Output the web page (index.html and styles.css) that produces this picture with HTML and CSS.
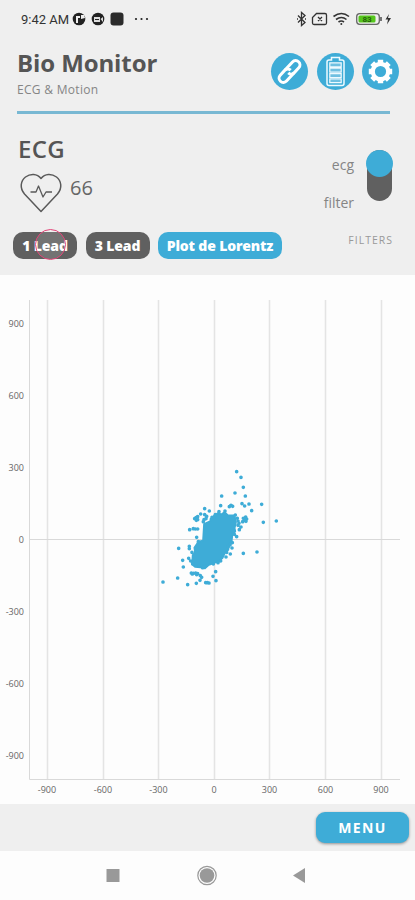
FILE: index.html
```html
<!DOCTYPE html>
<html lang="en">
<head>
  <meta charset="UTF-8">
  <meta name="viewport" content="width=device-width, initial-scale=1">
  <title>Bio Monitor</title>
  <link rel="stylesheet" href="styles.css">
</head>

<body>
  <div class="status-bar">
    <span class="clock">9:42 AM</span>
    <svg class="status-left" width="78" height="16" viewBox="0 0 78 16">
      <circle cx="7" cy="8" r="6.3" fill="#222"/>
      <path d="M4 5h4v2H6v5H4zM9 4h3l1 3-4 1z" fill="#eee"/>
      <circle cx="26" cy="8" r="6.3" fill="#222"/>
      <path d="M22 6h6v5h-6zM28.5 8l2.5-2v5z" fill="#ddd"/>
      <path d="M23 8.5h4" stroke="#222"/>
      <rect x="38.5" y="1.5" width="13" height="13" rx="3" fill="#2b2b2b"/>
      <g fill="#222"><circle cx="64" cy="8" r="1.1"/><circle cx="69.5" cy="8" r="1.1"/><circle cx="75" cy="8" r="1.1"/></g>
    </svg>
    <svg class="status-right" width="98" height="16" viewBox="0 0 98 16" fill="none" stroke="#333" stroke-width="1.3">
      <path d="M2 4.5l7 7-3.500 3V1.500L9 4.500l-7 7M1 8h1M9 8h1"/>
      <path d="M20.500 2.500h8.500q1.500 0 1.500 1.500v8q0 1.500-1.500 1.500H18q-1.500 0-1.500-1.500V6.500zM22 6l4 4M26 6l-4 4"/>
      <path d="M37.500 5.500q8-6 15.500 0M40 8.500q5.500-4 10.500 0M42.500 11q2.800-2 5.500 0" stroke-width="1.6"/>
      <circle cx="45.3" cy="13" r="1" fill="#333" stroke="none"/>
      <rect x="60.7" y="2.7" width="22.6" height="10.6" rx="3" stroke="#666"/>
      <rect x="62.5" y="4.5" width="17" height="7" rx="1.5" fill="#55c51b" stroke="none"/>
      <path d="M85 6v4"/>
      <text class="charge" x="71" y="11">83</text>
      <path d="M93 3l-3.500 5.500h2.500l-1 5 4-6.500h-3z" fill="#333" stroke="none"/>
    </svg>
  </div>

  <header class="app-header">
    <div class="titles">
      <h1>Bio Monitor</h1>
      <p>ECG &amp; Motion</p>
    </div>
    <div class="actions">
      <button class="round-button" aria-label="Connect">
        <svg width="37" height="37" viewBox="0 0 37 37" fill="none" stroke="#fff" stroke-width="3">
          <g transform="rotate(-47 18.5 18.5)">
            <path d="M20.500 22.800H9.500a4.300 4.300 0 0 1 0-8.600H16a4.300 4.300 0 0 1 4.300 4.300"/>
            <path d="M16.500 14.200h11a4.300 4.300 0 0 1 0 8.600H21a4.300 4.300 0 0 1-4.300-4.300"/>
          </g>
        </svg>
      </button>
      <button class="round-button" aria-label="Battery">
        <svg width="37" height="37" viewBox="0 0 37 37" fill="none" stroke="#eefaff" stroke-width="1.5">
          <path d="M14.500 7V4.500h8V7H25q2 0 2 2v21.500q0 2-2 2H12q-2 0-2-2V9q0-2 2-2z"/>
          <path d="M12.800 9.800h11.400v4H12.800zM12.800 15.200h11.400v4H12.800zM12.800 20.600h11.400v4H12.800zM12.800 26h11.400v3.700H12.800z" stroke-width="1.2" fill="#6fc0e1"/>
        </svg>
      </button>
      <button class="round-button" aria-label="Settings">
        <svg width="37" height="37" viewBox="0 0 37 37">
          <circle cx="18.5" cy="18.5" r="7.7" fill="none" stroke="#fff" stroke-width="4.2"/>
          <g stroke="#fff" stroke-width="5.4">
            <path d="M18.500 6.800v4M18.500 26.200v4M6.800 18.500h4M26.200 18.500h4"/>
            <path d="M10.200 10.200l2.800 2.800M24 24l2.800 2.800M10.200 26.800l2.800-2.800M24 13l2.800-2.800"/>
          </g>
        </svg>
      </button>
    </div>
  </header>

  <section class="ecg-panel">
    <div class="ecg-top">
      <div class="reading">
        <h2>ECG</h2>
        <div class="pulse">
          <svg width="42" height="40" viewBox="0 0 42 40" fill="none" stroke="#5a5a5a" stroke-width="1.5" stroke-linejoin="round">
            <path d="M21 38.500L4.500 21C-.5 15 .5 8 5.500 4 10.500.3 17 .3 21 5.500 25 .3 31.500.3 36.500 4 41.500 8 42.500 15 37.500 21z"/>
            <path d="M10.500 19H16l2.500-6 4.500 11 3-5h6" stroke-width="1.3"/>
          </svg>
          <span>66</span>
        </div>
      </div>
      <div class="switch-labels"><span>ecg</span><span>filter</span></div>
      <div class="switch"><div class="knob"></div></div>
    </div>
    <div class="chips">
      <button class="chip lead-one">1 Lead<span class="touch"></span></button>
      <button class="chip">3 Lead</button>
      <button class="chip active">Plot de Lorentz</button>
      <span class="filters">FILTERS</span>
    </div>
  </section>

  <main class="chart">
    <svg width="415" height="529" viewBox="0 275 415 529">
      <path class="grid" d="M47.500 300v479M103.500 300v479M158.500 300v479M214.500 300v479M269.500 300v479M325.500 300v479M381.500 300v479"/>
      <path class="axis" d="M29.500 300v479.500H400M29 539.500h371"/>
      <g class="y-labels">
        <text x="24" y="326.5">900</text>
        <text x="24" y="398.5">600</text>
        <text x="24" y="470.5">300</text>
        <text x="24" y="542.5">0</text>
        <text x="24" y="614.5">-300</text>
        <text x="24" y="686.5">-600</text>
        <text x="24" y="758.5">-900</text>
      </g>
      <g class="x-labels">
        <text x="47" y="793">-900</text>
        <text x="103" y="793">-600</text>
        <text x="158.5" y="793">-300</text>
        <text x="214" y="793">0</text>
        <text x="269.5" y="793">300</text>
        <text x="325.5" y="793">600</text>
        <text x="381" y="793">900</text>
      </g>
      <g transform="translate(150 455) scale(.3333)">
        <path class="cloud" d="M162 207l18-8 12-17 12-8 10 4 10-7 10 10h20l4 22-4 16 2 10-9 13-2 18-7 8-3 17-10 9-7 15-9 9-18 7-16 6-10 9-14-3-16-1-9-8 2-28 7-8-2-14 12-18 14-3z"/>
        <!-- scattered beats -->
        <path class="dots" d="M260 50h0M273 67h0M280 97h0M255 114h0M286 123h0M215 123h0M276 146h0M284 153h0M297 147h0M335 148h0M305 167h0M340 202h0M379 198h0M212 152h0M238 155h0M243 151h0M248 154h0M164 161h0M178 168h0M152 177h0M138 188h0M143 185h0M139 196h0M134 191h0M143 194h0M164 179h0M170 184h0M168 191h0M162 194h0M160 200h0M186 187h0M184 193h0M196 179h0M192 186h0M207 170h0M225 168h0M280 190h0M287 186h0M290 192h0M283 196h0M288 199h0M278 200h0M267 205h0M273 216h0M264 211h0M268 224h0M256 180h0M262 190h0M264 198h0M119 224h0M130 221h0M136 222h0M143 222h0M86 280h0M118 274h0M118 281h0M98 316h0M116 310h0M100 336h0M260 245h0M253 238h0M247 263h0M240 270h0M246 279h0M235 274h0M230 292h0M241 297h0M228 306h0M280 295h0M321 291h0M140 247h0M145 260h0M126 292h0M122 318h0M128 326h0M147 333h0M158 338h0M166 333h0M190 327h0M204 323h0M212 318h0M197 350h0M189 364h0M198 377h0M124 354h0M131 355h0M137 354h0M143 356h0M127 357h0M140 359h0M151 362h0M155 367h0M150 376h0M139 385h0M113 389h0M83 369h0M39 381h0M167 383h0M172 383h0M177 384h0"/>
      </g>
    </svg>
  </main>

  <footer class="menu-bar"><button class="menu-button">MENU</button></footer>

  <nav class="system-nav">
    <svg width="415" height="48" viewBox="0 0 415 48" fill="#999">
      <rect x="106.5" y="18" width="13" height="13"/>
      <circle cx="207" cy="24.5" r="7.3"/>
      <circle cx="207" cy="24.5" r="9.2" fill="none" stroke="#999" stroke-width="1.2"/>
      <path d="M293 24.500l12-7.500v15z"/>
    </svg>
  </nav>
</body>
</html>
```
FILE: styles.css
```css
* {
  box-sizing: border-box;
}

body {
  margin: 0;
  width: 415px;
  height: 900px;
  overflow: hidden;
  display: flex;
  flex-direction: column;
  background: #efefef;
  color: #555;
  font-family: "Open Sans", "Noto Sans", sans-serif;
}

h1, h2, p {
  margin: 0;
}

button {
  border: none;
  padding: 0;
  font-family: inherit;
}

svg {
  display: block;
}

.status-bar {
  height: 38px;
  padding: 0 21px;
  display: flex;
  align-items: center;
  color: #333;
  font: 13px Roboto, sans-serif;
}

.clock {
  width: 50px;
  white-space: nowrap;
}

.status-left {
  margin-left: 1px;
}

.status-right {
  margin-left: auto;
}

.charge {
  font: bold 8px Roboto, sans-serif;
  fill: #26620b;
  stroke: none;
  text-anchor: middle;
}

.app-header {
  height: 76px;
  margin: 0 25px 0 17px;
  border-bottom: 3px solid #78b8d3;
  display: flex;
  justify-content: space-between;
}

.titles h1 {
  margin-top: 8px;
  font-size: 24px;
  font-weight: 700;
  line-height: 34px;
  letter-spacing: -0.1px;
}

.titles p {
  margin-top: 1px;
  font-size: 12px;
  line-height: 17px;
  letter-spacing: 0.3px;
  color: #858585;
}

.actions {
  display: flex;
  gap: 8.5px;
  margin: 15px -9px 0 0;
}

.round-button {
  width: 37px;
  height: 37px;
  border-radius: 50%;
  background: #3eacd7;
}

.ecg-panel {
  height: 161px;
  padding: 0 22px 0 13px;
}

.ecg-top {
  height: 118px;
  display: flex;
}

.reading {
  flex: 1;
  padding: 19px 0 0 5px;
}

.reading h2 {
  font-size: 24px;
  font-weight: 600;
  line-height: 32px;
  letter-spacing: 0.3px;
}

.pulse {
  display: flex;
  gap: 8px;
  margin: 8px 0 0 2px;
  font-size: 20px;
  line-height: 29px;
  color: #666;
}

.switch-labels {
  display: flex;
  flex-direction: column;
  align-items: flex-end;
  gap: 18px;
  padding-top: 41px;
  margin-right: 13px;
  font-size: 14px;
  line-height: 20px;
  color: #858585;
}

.switch {
  width: 25px;
  height: 51px;
  margin: 36px 1px 0 0;
  border-radius: 13px;
  background: #606060;
}

.knob {
  width: 27px;
  height: 27px;
  margin-left: -1px;
  border-radius: 50%;
  background: #3eacd7;
}

.chips {
  display: flex;
  gap: 8.5px;
}

.chip {
  width: 64px;
  height: 27px;
  border-radius: 10px;
  background: #606060;
  color: #fff;
  font-size: 14px;
  font-weight: 800;
  letter-spacing: -0.15px;
}

.lead-one {
  position: relative;
}

/* ring left by the finger press */
.touch {
  position: absolute;
  left: 22px;
  top: -3px;
  width: 31px;
  height: 31px;
  border: 1px solid #e24478;
  border-radius: 50%;
  background: rgba(255, 255, 255, 0.12);
}

.chip.active {
  width: 124px;
  background: #3eacd7;
}

.filters {
  margin-left: auto;
  font-size: 10.5px;
  line-height: 17px;
  letter-spacing: 1px;
  color: #999;
}

.chart {
  height: 529px;
  background: #fdfdfd;
}

.chart text {
  font: 9px "Open Sans", sans-serif;
  fill: #666;
}

.grid {
  stroke: #e4e4e4;
  stroke-width: 1.5;
}

.axis {
  fill: none;
  stroke: #d9d9d9;
}

.y-labels {
  text-anchor: end;
}

.x-labels {
  text-anchor: middle;
}

.cloud {
  fill: #3eacd7;
  stroke: #3eacd7;
  stroke-width: 5;
  stroke-linejoin: round;
}

.dots {
  fill: none;
  stroke: #3eacd7;
  stroke-width: 11;
  stroke-linecap: round;
}

.menu-bar {
  height: 47px;
  padding: 8px 6px 0 0;
  display: flex;
  justify-content: flex-end;
}

.menu-button {
  width: 93px;
  height: 31px;
  border-radius: 9px;
  background: #3eacd7;
  box-shadow: 0 1px 3px rgba(0, 0, 0, 0.4);
  color: #fff;
  font-size: 14px;
  font-weight: 700;
  letter-spacing: 1.4px;
}

.system-nav {
  height: 49px;
  background: #fdfdfd;
}
```
